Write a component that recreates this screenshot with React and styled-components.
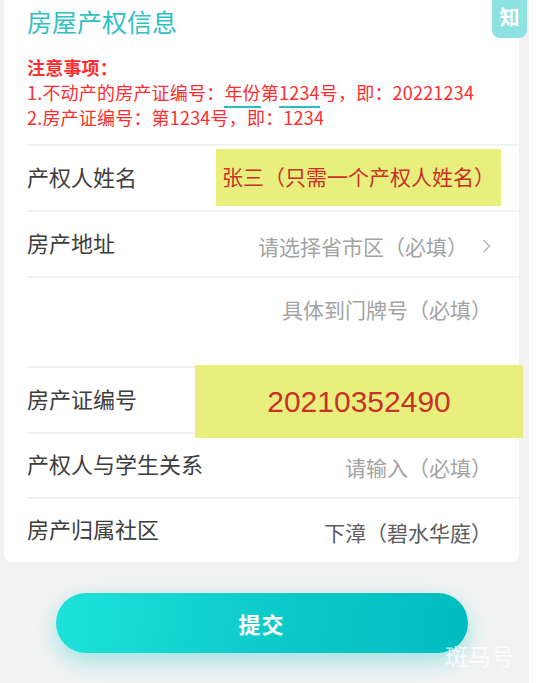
import styled, { createGlobalStyle } from "styled-components";

const GlobalStyle = createGlobalStyle`
    html, body {
        margin: 0;
        padding: 0;
        background: #ffffff;
    }
    * {
        box-sizing: border-box;
    }
`

const Page = styled.div`
    position: relative;
    width: 529px;
    height: 683px;
    padding-left: 4px;
    background-color: #f2f2f2;
    font-family: "Noto Sans CJK SC", "Noto Sans", sans-serif;
    overflow: hidden;
`

const Column = styled.div`
    width: 515px;
    display: flex;
    flex-direction: column;
    align-items: center;
`

const Card = styled.div`
    width: 100%;
    background-color: white;
    border-radius: 0 0 8px 8px;
    padding-top: 5px;
`

const Title = styled.h2`
    margin: 0 0 0 23px;
    font-size: 25px;
    line-height: 32px;
    font-weight: 400;
    color: #30c0c3;
`

const Notice = styled.div`
    margin: 18px 0 14px 23px;
    color: #ff2d2d;
    font-size: 18px;
    line-height: 25px;
    letter-spacing: 0.2px;
`

const NoticeHead = styled.div`
    font-weight: 700;
`

const Mark = styled.span`
    border-bottom: 2px solid #2bbdc0;
    padding-bottom: 1px;
`

const Row = styled.div`
    position: relative;
    height: ${(p) => p.$h || 66}px;
    margin-left: 23px;
    padding-right: 27px;
    border-top: 2px solid #f1f1f1;
    display: flex;
    align-items: ${(p) => (p.$top ? "flex-start" : "center")};
    justify-content: ${(p) => (p.$top ? "flex-end" : "space-between")};
    padding-top: ${(p) => (p.$top ? "13px" : "0")};
`

const Label = styled.span`
    font-size: 22px;
    line-height: 30px;
    padding-bottom: 5px;
    color: #3d3d3d;
`

const Value = styled.span`
    display: flex;
    align-items: center;
    gap: 13px;
    padding-top: 3px;
    font-size: 21px;
    line-height: 30px;
    color: ${(p) => (p.$placeholder ? "#a3a3a3" : "#5c5c5c")};
`

const Highlight = styled.div`
    position: absolute;
    z-index: 1;
    background-color: #e9ef7d;
    color: #c8312a;
    display: flex;
    align-items: center;
    justify-content: ${(p) => (p.$center ? "center" : "flex-start")};
    padding-left: ${(p) => (p.$center ? "0" : "6px")};
`

const NameNote = styled(Highlight)`
    left: 189px;
    top: 3px;
    width: 285px;
    height: 57px;
    font-size: 21px;
    padding-bottom: 3px;
`

const CertNo = styled(Highlight)`
    left: 168px;
    top: -3px;
    width: 328px;
    height: 73px;
    font-family: "Liberation Sans", Arial, sans-serif;
    font-size: 30px;
`

const SubmitButton = styled.button`
    margin-top: 31px;
    width: 412px;
    height: 60px;
    border: none;
    border-radius: 30px;
    background: linear-gradient(100deg, #1ee2da 0%, #0cc9c9 55%, #00bcbf 100%);
    box-shadow: 0 8px 22px rgba(0, 200, 200, 0.35);
    color: white;
    font-family: "Noto Sans CJK SC", sans-serif;
    font-size: 22px;
    font-weight: 700;
    letter-spacing: 1px;
`

const Badge = styled.div`
    position: absolute;
    top: 0;
    left: 492px;
    width: 35px;
    height: 38px;
    border-radius: 0 0 8px 8px;
    background-color: #8ee1e1;
    color: white;
    font-size: 20px;
    font-weight: 700;
    display: flex;
    justify-content: center;
    padding-top: 2px;
`

const Watermark = styled.div`
    position: absolute;
    left: 445px;
    top: 638px;
    font-size: 23px;
    color: rgba(255, 255, 255, 0.75);
`

function Chevron() {
    return (
        <svg width="11" height="16" viewBox="0 0 11 16">
            <path d="M2.5 2 L8.5 8 L2.5 14" fill="none" stroke="#bcbcbc" strokeWidth="1.7" />
        </svg>
    );
}

export default function App() {
    return (
        <Page>
            <GlobalStyle />
            <Column>
                <Card>
                    <Title>房屋产权信息</Title>
                    <Notice>
                        <NoticeHead>注意事项：</NoticeHead>
                        <div>1.不动产的房产证编号：<Mark>年份</Mark>第<Mark>1234</Mark>号，即：20221234</div>
                        <div>2.房产证编号：第1234号，即：1234</div>
                    </Notice>
                    <Row>
                        <Label>产权人姓名</Label>
                        <NameNote>张三（只需一个产权人姓名）</NameNote>
                    </Row>
                    <Row>
                        <Label>房产地址</Label>
                        <Value $placeholder>请选择省市区（必填）<Chevron /></Value>
                    </Row>
                    <Row $h={90} $top>
                        <Value $placeholder>具体到门牌号（必填）</Value>
                    </Row>
                    <Row>
                        <Label>房产证编号</Label>
                        <CertNo $center>20210352490</CertNo>
                    </Row>
                    <Row $h={65}>
                        <Label>产权人与学生关系</Label>
                        <Value $placeholder>请输入（必填）</Value>
                    </Row>
                    <Row $h={65}>
                        <Label>房产归属社区</Label>
                        <Value>下漳（碧水华庭）</Value>
                    </Row>
                </Card>
                <SubmitButton>提交</SubmitButton>
            </Column>
            <Badge>知</Badge>
            <Watermark>斑马号</Watermark>
        </Page>
    );
}
